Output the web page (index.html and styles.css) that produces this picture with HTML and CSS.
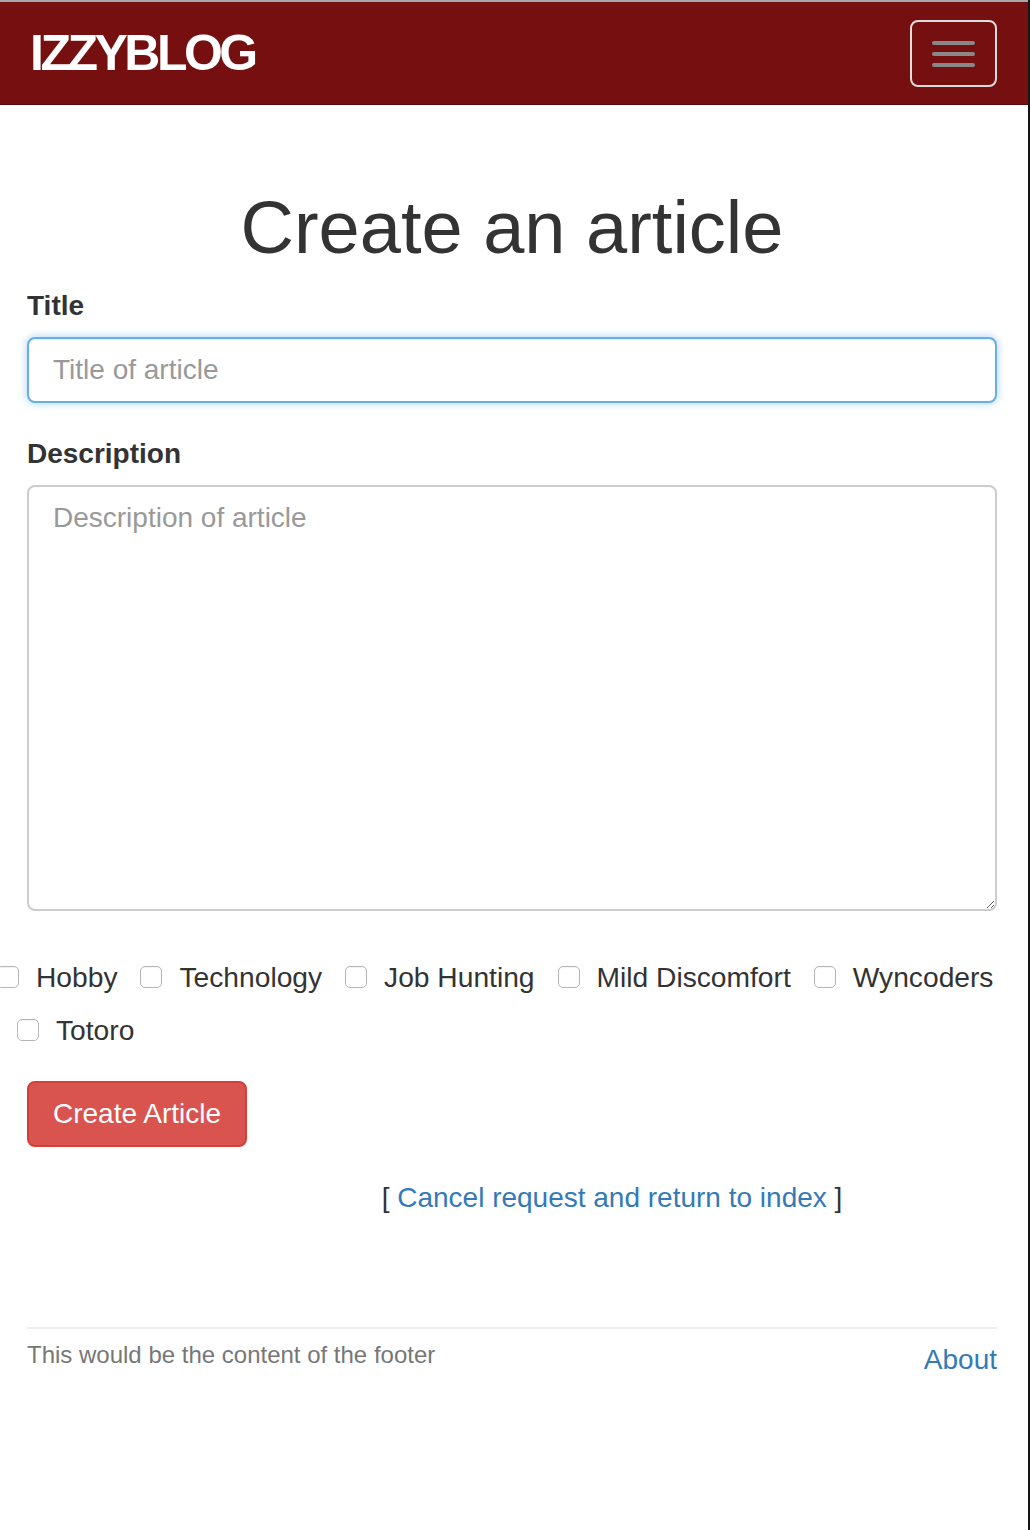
FILE: index.html
```html
<!DOCTYPE html>
<html lang="en">
<head>
<meta charset="utf-8">
<title>IzzyBlog - Create an article</title>
<link rel="stylesheet" href="styles.css">
</head>
<body>
<nav class="navbar">
  <a class="brand" href="#">IZZYBLOG</a>
  <button class="toggle" type="button" aria-label="Toggle navigation">
    <span class="bar"></span><span class="bar"></span><span class="bar"></span>
  </button>
</nav>
<main class="container">
  <h1 class="page-title">Create an article</h1>
  <form class="article-form">
    <div class="field">
      <label class="field-label" for="title">Title</label>
      <input class="control control-focus" id="title" type="text" placeholder="Title of article">
    </div>
    <div class="field">
      <label class="field-label" for="desc">Description</label>
      <textarea class="control textarea" id="desc" placeholder="Description of article"></textarea>
    </div>
    <div class="categories">
      <label class="cat first"><input type="checkbox" class="cb"><span>Hobby</span></label>
      <label class="cat"><input type="checkbox" class="cb"><span>Technology</span></label>
      <label class="cat"><input type="checkbox" class="cb"><span>Job Hunting</span></label>
      <label class="cat"><input type="checkbox" class="cb"><span>Mild Discomfort</span></label>
      <label class="cat"><input type="checkbox" class="cb"><span>Wyncoders</span></label>
      <label class="cat"><input type="checkbox" class="cb"><span>Totoro</span></label>
    </div>
    <button class="btn-danger" type="submit">Create Article</button>
  </form>
  <p class="cancel">[ <a href="#">Cancel request and return to index</a> ]</p>
  <footer class="footer">
    <span class="footer-text">This would be the content of the footer</span>
    <a class="footer-link" href="#">About</a>
  </footer>
</main>
</body>
</html>
```

FILE: styles.css
```css
* { box-sizing: border-box; }
html { background: #fff; }
body {
  margin: 0;
  min-height: 1530px;
  background: #fff;
  border-right: 2px solid #151515;
  font-family: "Liberation Sans", Arial, Helvetica, sans-serif;
  color: #333;
}
a { color: #337ab7; text-decoration: none; }

.navbar {
  height: 105px;
  background: #761010;
  border-top: 2px solid #a8a8a8;
  border-bottom: 1px solid #5a0b0b;
  display: flex;
  align-items: center;
  justify-content: space-between;
  padding: 0 31px 0 30px;
}
.brand {
  color: #fff;
  font-size: 50px;
  font-weight: bold;
  letter-spacing: -3.5px;
  line-height: 1;
}
.toggle {
  width: 87px;
  height: 67px;
  margin-top: 1px;
  background: transparent;
  border: 2px solid #ddd;
  border-radius: 8px;
  display: flex;
  flex-direction: column;
  align-items: center;
  justify-content: center;
  gap: 7px;
  padding: 0;
}
.bar {
  display: block;
  width: 43px;
  height: 4px;
  border-radius: 2px;
  background: #888;
}

.container { padding: 0 31px 0 27px; }
.page-title {
  margin: 82px 0 0;
  font-size: 74px;
  line-height: 82px;
  font-weight: normal;
  text-align: center;
  color: #333;
}
.article-form { margin-top: 17px; }
.field { display: flex; flex-direction: column; }
.field + .field { margin-top: 31px; }
.field-label {
  font-size: 28px;
  font-weight: bold;
  line-height: 40px;
  margin-bottom: 11px;
}
.control {
  width: 100%;
  font-family: inherit;
  font-size: 28px;
  color: #555;
  background: #fff;
  border: 2px solid #ccc;
  border-radius: 8px;
  padding: 0 24px;
  height: 66px;
  outline: none;
}
.control::placeholder { color: #999; }
.control-focus {
  border-color: #66afe9;
  box-shadow: inset 0 1px 1px rgba(0,0,0,.075), 0 0 8px rgba(102,175,233,.6);
}
.textarea {
  height: 426px;
  padding: 11px 24px;
  line-height: 40px;
  resize: vertical;
}

.categories {
  display: flex;
  flex-wrap: wrap;
  column-gap: 23px;
  row-gap: 13px;
  margin: 46px -30px 0 -10px;
}
.cat {
  display: flex;
  align-items: center;
  gap: 17px;
  font-size: 28.2px;
  line-height: 40px;
  color: #333;
}
.cat.first { margin-left: -20px; }
.cb {
  appearance: none;
  -webkit-appearance: none;
  margin: 0;
  width: 22px;
  height: 22px;
  border: 1.5px solid #b5b5b5;
  border-radius: 5px;
  background: #fff;
  box-shadow: inset 0 1px 1px rgba(0,0,0,.05);
}

.btn-danger {
  display: block;
  margin-top: 31px;
  height: 66px;
  padding: 0 24px;
  font-family: inherit;
  font-size: 28px;
  color: #fff;
  background: #d9534f;
  border: 2px solid #d43f3a;
  border-radius: 8px;
}

.cancel {
  margin: 31px 0 0 200px;
  font-size: 28px;
  line-height: 40px;
  text-align: center;
  color: #333;
}

.footer {
  margin-top: 109px;
  border-top: 2px solid #eee;
  padding-top: 9px;
  display: flex;
  justify-content: space-between;
  align-items: flex-start;
}
.footer-text {
  font-size: 24px;
  line-height: 34px;
  color: #777;
}
.footer-link {
  font-size: 28px;
  line-height: 40px;
  margin-top: 2px;
}
```
